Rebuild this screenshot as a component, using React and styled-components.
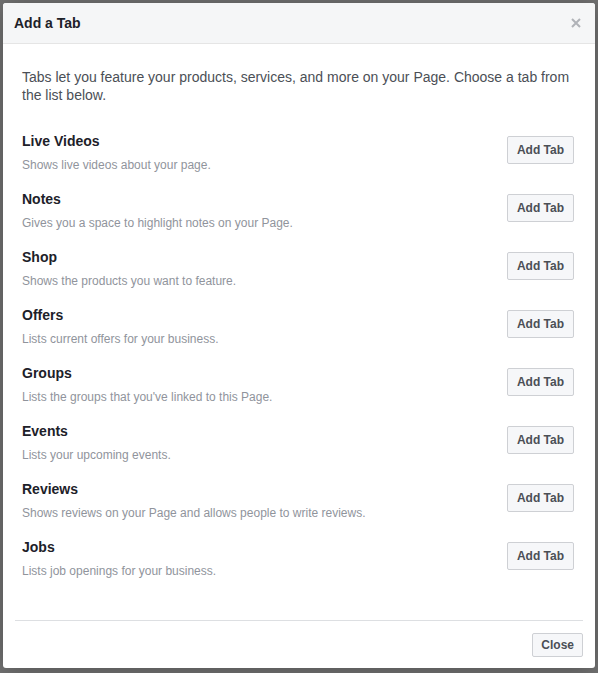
import React from "react";
import styled, { createGlobalStyle } from "styled-components";

const GlobalStyle = createGlobalStyle`
  html, body {
    margin: 0;
    padding: 0;
    background: #707070;
    font-family: "Liberation Sans", Arial, Helvetica, sans-serif;
  }
`;

const Backdrop = styled.div`
  width: 598px;
  height: 673px;
  padding: 3px;
  box-sizing: border-box;
  background: #737373;
`;

const Dialog = styled.div`
  width: 592px;
  height: 665px;
  background: #fff;
  border-radius: 3px;
  box-shadow: 0 2px 26px rgba(0, 0, 0, 0.3);
  display: flex;
  flex-direction: column;
  overflow: hidden;
`;

const Header = styled.div`
  height: 40px;
  background: #f5f6f7;
  border-bottom: 1px solid #e5e5e5;
  display: flex;
  align-items: center;
  justify-content: space-between;
  padding: 0 12px 0 11px;
`;

const Title = styled.div`
  font-size: 14px;
  font-weight: bold;
  color: #1d2129;
`;

const CloseX = styled.button`
  border: 0;
  background: none;
  padding: 0;
  width: 12px;
  height: 12px;
  margin-right: 1px;
  cursor: pointer;
  display: flex;
`;

const Body = styled.div`
  flex: 1;
  padding: 24px 21px 0 19px;
`;

const Intro = styled.p`
  margin: 0 0 28px;
  font-size: 14px;
  line-height: 18px;
  color: #4b4f56;
`;

const Row = styled.div`
  height: 58px;
  display: flex;
  justify-content: space-between;
  align-items: flex-start;
`;

const Info = styled.div`
  display: flex;
  flex-direction: column;
  gap: 7px;
`;

const Name = styled.div`
  font-size: 14px;
  line-height: 18px;
  font-weight: bold;
  color: #1d2129;
`;

const Desc = styled.div`
  font-size: 12px;
  line-height: 16px;
  color: #90949c;
`;

const Button = styled.button`
  height: ${(p) => p.h || 28}px;
  margin-top: ${(p) => p.mt || 0}px;
  padding: 0 ${(p) => p.px || 9}px;
  background: #f6f7f9;
  border: 1px solid #ced0d4;
  border-radius: 2px;
  font-family: inherit;
  font-size: 12px;
  font-weight: bold;
  color: #4b4f56;
  cursor: pointer;
`;

const Footer = styled.div`
  margin: 0 12px;
  border-top: 1px solid #dddfe2;
  padding: 12px 0 11px;
  display: flex;
  justify-content: flex-end;
`;

const tabs = [
  ["Live Videos", "Shows live videos about your page."],
  ["Notes", "Gives you a space to highlight notes on your Page."],
  ["Shop", "Shows the products you want to feature."],
  ["Offers", "Lists current offers for your business."],
  ["Groups", "Lists the groups that you've linked to this Page."],
  ["Events", "Lists your upcoming events."],
  ["Reviews", "Shows reviews on your Page and allows people to write reviews."],
  ["Jobs", "Lists job openings for your business."],
];

export default function App() {
  return (
    <>
      <GlobalStyle />
      <Backdrop>
        <Dialog>
          <Header>
            <Title>Add a Tab</Title>
            <CloseX aria-label="Close">
              <svg width="12" height="12" viewBox="0 0 12 12">
                <path d="M2 2 L10 10 M10 2 L2 10" stroke="#b0b3b8" strokeWidth="2" />
              </svg>
            </CloseX>
          </Header>
          <Body>
            <Intro>
              Tabs let you feature your products, services, and more on your Page. Choose a tab from
              the list below.
            </Intro>
            {tabs.map(([name, desc]) => (
              <Row key={name}>
                <Info>
                  <Name>{name}</Name>
                  <Desc>{desc}</Desc>
                </Info>
                <Button mt={4}>Add Tab</Button>
              </Row>
            ))}
          </Body>
          <Footer>
            <Button h={24} px={8}>Close</Button>
          </Footer>
        </Dialog>
      </Backdrop>
    </>
  );
}
